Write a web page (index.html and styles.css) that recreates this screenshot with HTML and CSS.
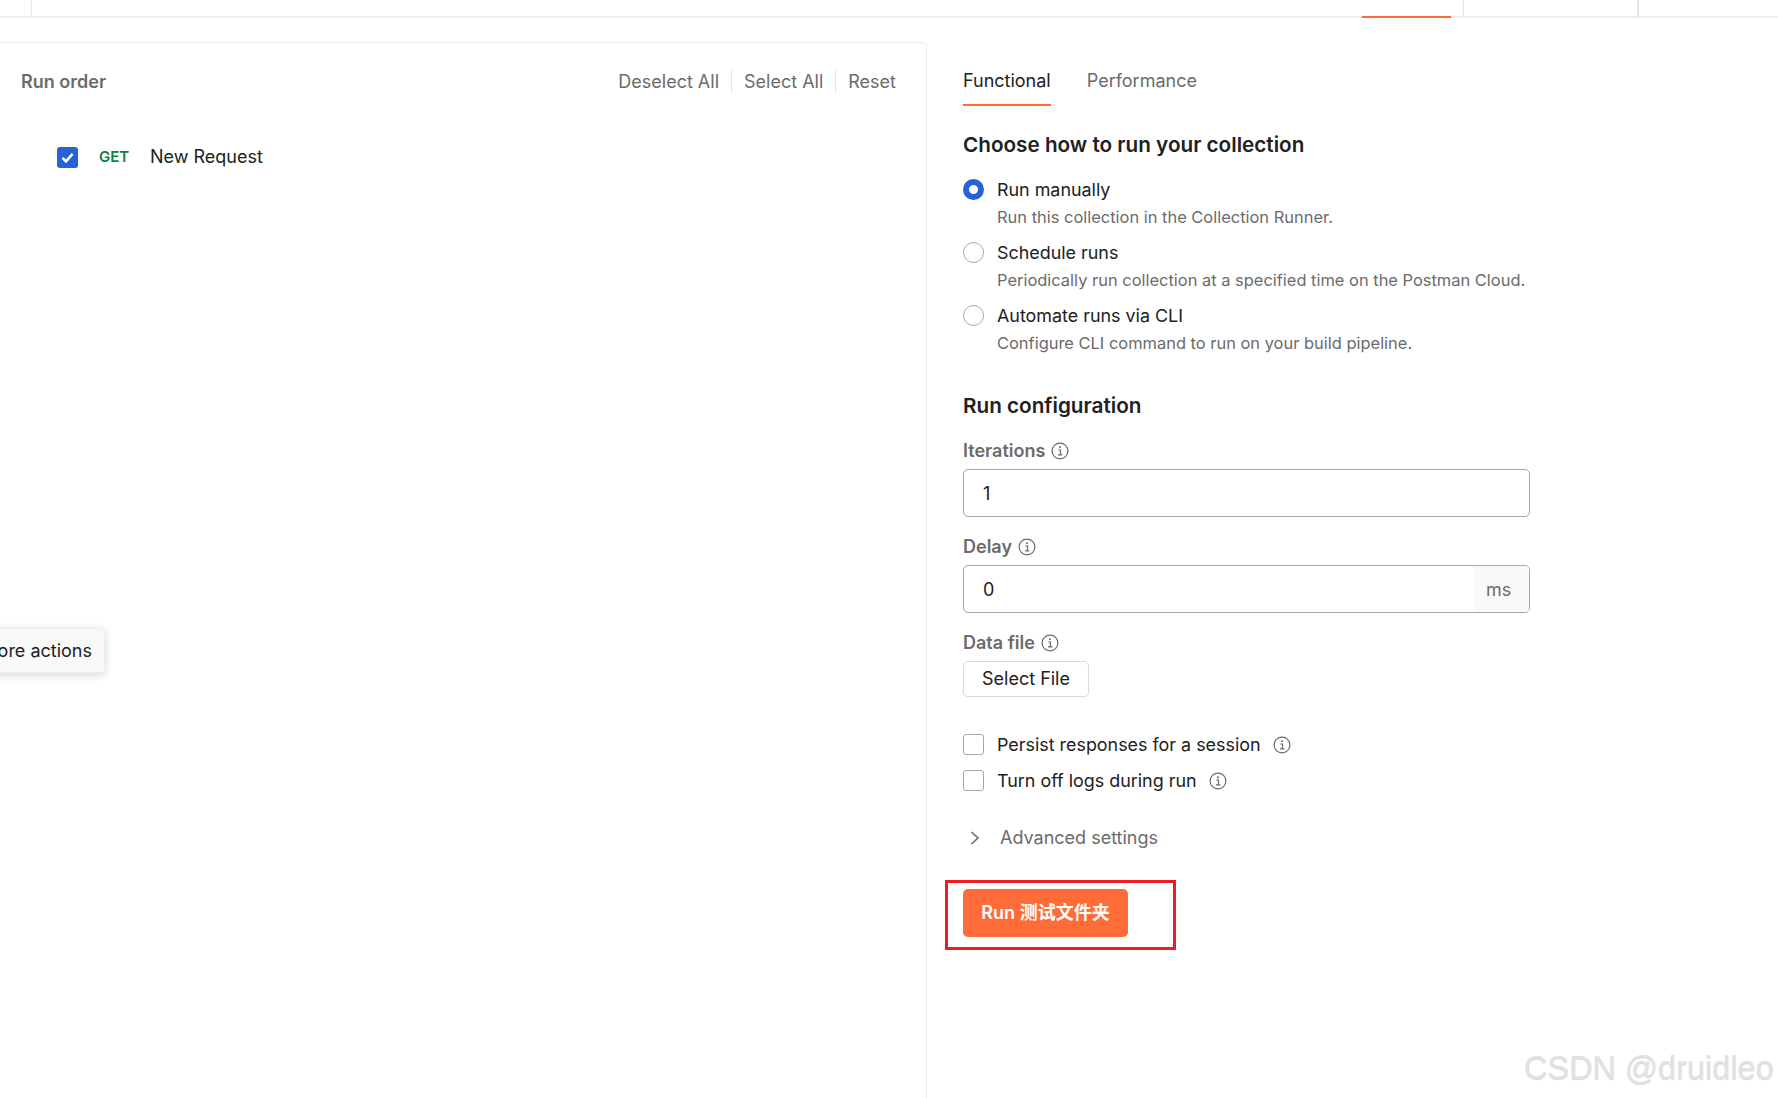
FILE: index.html
```html
<!DOCTYPE html>
<html lang="en">
<head>
<meta charset="utf-8">
<title>Collection Runner</title>
<link rel="stylesheet" href="styles.css">
</head>
<body>
<svg class="defs" width="0" height="0" aria-hidden="true">
  <symbol id="info" viewBox="0 0 18 18">
    <circle cx="9" cy="9" r="7.9" fill="none" stroke="currentColor" stroke-width="1.2"/>
    <circle cx="9" cy="5.2" r="1" fill="currentColor"/>
    <path d="M7.2 8h2.3v4.8M7 12.9h4.4" fill="none" stroke="currentColor" stroke-width="1.2"/>
  </symbol>
</svg>
<header class="topbar">
  <div class="top-first"></div>
  <div class="top-tabs"><span class="top-active"></span></div>
  <div class="top-cell top-cell-a"></div>
  <div class="top-cell top-cell-b"></div>
</header>
<main class="main">
  <section class="order-panel">
    <div class="order-head">
      <h2 class="order-title">Run order</h2>
      <div class="order-actions">
        <span class="order-action">Deselect All</span>
        <span class="order-action">Select All</span>
        <span class="order-action">Reset</span>
      </div>
    </div>
    <div class="request-row">
      <span class="check check-on">
        <svg viewBox="0 0 21 21" width="21" height="21"><path d="M5.5 10.8l3.5 3.6 6.6-7.6" fill="none" stroke="#fff" stroke-width="2.6"/></svg>
      </span>
      <span class="method">GET</span>
      <span class="request-name">New Request</span>
    </div>
    <div class="tooltip">More actions</div>
  </section>
  <section class="config">
    <nav class="tabs">
      <span class="tab tab-active">Functional</span>
      <span class="tab">Performance</span>
    </nav>
    <h3 class="heading heading-first">Choose how to run your collection</h3>
    <div class="options">
      <div class="option">
        <div class="line"><span class="radio radio-on"></span><span class="option-label">Run manually</span></div>
        <p class="option-desc">Run this collection in the Collection Runner.</p>
      </div>
      <div class="option">
        <div class="line"><span class="radio"></span><span class="option-label">Schedule runs</span></div>
        <p class="option-desc">Periodically run collection at a specified time on the Postman Cloud.</p>
      </div>
      <div class="option">
        <div class="line"><span class="radio"></span><span class="option-label">Automate runs via CLI</span></div>
        <p class="option-desc">Configure CLI command to run on your build pipeline.</p>
      </div>
    </div>
    <h3 class="heading heading-second">Run configuration</h3>
    <div class="field">
      <div class="field-label">Iterations <svg class="info"><use href="#info"/></svg></div>
      <div class="input"><span class="input-value">1</span></div>
    </div>
    <div class="field">
      <div class="field-label">Delay <svg class="info"><use href="#info"/></svg></div>
      <div class="input"><span class="input-value">0</span><span class="addon">ms</span></div>
    </div>
    <div class="field">
      <div class="field-label">Data file <svg class="info"><use href="#info"/></svg></div>
      <button class="file-btn" type="button">Select File</button>
    </div>
    <div class="checks">
      <div class="line"><span class="check"></span><span class="option-label">Persist responses for a session</span><svg class="info info-wide"><use href="#info"/></svg></div>
      <div class="line"><span class="check"></span><span class="option-label">Turn off logs during run</span><svg class="info info-wide"><use href="#info"/></svg></div>
    </div>
    <div class="advanced">
      <svg class="chevron" viewBox="0 0 10 14" width="10" height="14"><path d="M1.5 1l6.5 6-6.5 6" fill="none" stroke="#6b6b6b" stroke-width="1.6"/></svg>
      <span>Advanced settings</span>
    </div>
    <div class="run-wrap">
      <button class="run-btn" type="button">Run 测试文件夹</button>
    </div>
  </section>
</main>
<div class="watermark">CSDN @druidleo</div>
</body>
</html>
```

FILE: styles.css
```css
*, *::after { box-sizing: border-box; }
html, body { margin: 0; height: 100%; }
body {
  position: relative;
  width: 1778px;
  height: 1098px;
  overflow: hidden;
  background: #fff;
  color: #212121;
  font-family: Inter, "Noto Sans CJK SC", sans-serif;
  font-size: 18px;
  line-height: 22px;
}
.defs { position: absolute; }
h2, h3, p { margin: 0; font: inherit; }

.topbar { display: flex; height: 18px; }
.top-first { width: 32px; border-right: 1px solid #e8e8e8; border-bottom: 2px solid #ededed; }
.top-tabs { position: relative; width: 1431px; border-bottom: 2px solid #ededed; }
.top-active { position: absolute; left: 1330px; bottom: -2px; width: 89px; height: 2px; background: #ff6c37; }
.top-cell { border-left: 1px solid #e4e4e4; border-bottom: 2px solid #ededed; }
.top-cell-a { width: 174px; }
.top-cell-b { flex: 1; border-left-width: 2px; }

.main { display: flex; height: 1080px; }
.order-panel {
  position: relative;
  width: 927px;
  margin-top: 24px;
  padding: 27px 30px 0 21px;
  border-top: 1px solid #ededed;
  border-right: 1px solid #ededed;
  border-top-right-radius: 5px;
}
.order-head { display: flex; justify-content: space-between; align-items: center; height: 24px; }
.order-title { font-weight: 600; color: #6b6b6b; }
.order-actions { display: flex; }
.order-action { height: 24px; padding: 0 12px; border-left: 1px solid #e6e6e6; color: #6b6b6b; line-height: 24px; }
.order-action:first-child { border-left: 0; }
.order-action:last-child { padding-right: 0; }
.request-row { display: flex; align-items: center; height: 22px; margin-top: 52px; padding-left: 36px; }
.method { width: 51px; margin-left: 21px; color: #0f8040; font-size: 15px; font-weight: 600; }
.request-name { color: #212121; }
.tooltip {
  position: absolute;
  top: 585px;
  right: 821px;
  height: 45px;
  padding: 0 12px;
  border: 1px solid #ededed;
  border-radius: 4px;
  background: #f9f9f9;
  box-shadow: 0 2px 8px rgba(0, 0, 0, .16);
  color: #212121;
  line-height: 43px;
  white-space: nowrap;
}

.config { flex: 1; padding-left: 36px; }
.tabs { display: flex; gap: 36px; margin-top: 44px; }
.tab { height: 44px; color: #6b6b6b; line-height: 38px; }
.tab-active { border-bottom: 2px solid #ff6c37; color: #212121; }
.heading { font-size: 20.7px; font-weight: 600; line-height: 28px; color: #212121; }
.heading-first { margin-top: 25px; }
.heading-second { margin-top: 38px; }
.options { display: flex; flex-direction: column; gap: 14px; margin-top: 20px; }
.line { display: flex; align-items: flex-start; height: 22px; }
.radio { width: 21px; height: 21px; border: 1px solid #a6a6a6; border-radius: 50%; }
.radio-on { border: 6px solid #2563d6; }
.option-label { margin-left: 13px; color: #212121; font-size: 17.9px; }
.option-desc { margin-top: 5px; padding-left: 34px; color: #6b6b6b; font-size: 16.45px; }
.field { margin-top: 19px; }
.heading-second + .field { margin-top: 20px; }
.field-label { display: flex; align-items: center; gap: 6px; height: 22px; color: #6b6b6b; font-weight: 600; }
.info { display: block; width: 18px; height: 18px; color: #6b6b6b; }
.info-wide { margin: 2px 0 0 12px; }
.input {
  display: flex;
  justify-content: space-between;
  width: 567px;
  height: 48px;
  margin-top: 7px;
  border: 1px solid #a6a6a6;
  border-radius: 5px;
  overflow: hidden;
  line-height: 47px;
}
.input-value { padding-left: 19px; color: #212121; }
.addon { width: 55px; padding-left: 12px; background: #f9f9f9; color: #6b6b6b; }
.file-btn {
  display: block;
  width: 126px;
  height: 36px;
  margin-top: 7px;
  padding: 0;
  border: 1px solid #d9d9d9;
  border-radius: 5px;
  background: #fff;
  color: #212121;
  font: inherit;
}
.checks { display: flex; flex-direction: column; gap: 14px; margin-top: 37px; }
.check { display: block; flex: none; width: 21px; height: 21px; border: 1px solid #a6a6a6; border-radius: 3px; background: #fff; }
.check-on { border: 0; background: #2563d6; }
.check-on svg { display: block; }
.advanced { display: flex; align-items: center; height: 22px; margin-top: 35px; padding-left: 7px; color: #6b6b6b; }
.chevron { margin-right: 20px; }
.run-wrap { position: relative; width: 165px; margin-top: 40px; }
.run-wrap::after {
  content: "";
  position: absolute;
  top: -9px;
  left: -18px;
  width: 231px;
  height: 70px;
  border: 3px solid #ed1c24;
}
.run-btn {
  display: block;
  width: 165px;
  height: 48px;
  padding: 0;
  border: 0;
  border-radius: 5px;
  background: #ff6c37;
  color: #fff;
  font: inherit;
  font-weight: 600;
}
.watermark {
  position: absolute;
  top: 1046px;
  left: 1524px;
  color: #e2e2e2;
  font-family: "Liberation Sans", sans-serif;
  font-size: 32.5px;
  line-height: 44px;
  white-space: nowrap;
  text-shadow: 0 1px 1px rgba(0, 0, 0, .16);
}
```
